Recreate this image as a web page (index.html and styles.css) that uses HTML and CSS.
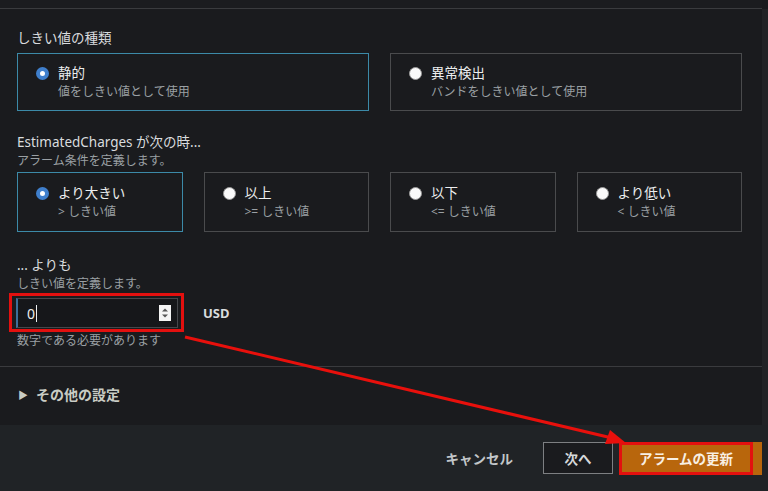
FILE: index.html
```html
<!DOCTYPE html>
<html lang="ja">
<head>
  <meta charset="UTF-8">
  <title>アラームの更新</title>
  <link rel="stylesheet" href="styles.css">
</head>
<body>
  <div class="page">
    <div class="top-strip"></div>

    <div class="panel">
      <div class="field">
        <div class="field-label">しきい値の種類</div>
        <div class="tiles tiles-2">
          <div class="tile selected">
            <span class="radio checked"></span>
            <div>
              <div class="tile-title">静的</div>
              <div class="tile-desc">値をしきい値として使用</div>
            </div>
          </div>
          <div class="tile">
            <span class="radio"></span>
            <div>
              <div class="tile-title">異常検出</div>
              <div class="tile-desc">バンドをしきい値として使用</div>
            </div>
          </div>
        </div>
      </div>

      <div class="field field-condition">
        <div class="field-label">EstimatedCharges が次の時...</div>
        <div class="field-desc">アラーム条件を定義します。</div>
        <div class="tiles tiles-4">
          <div class="tile selected">
            <span class="radio checked"></span>
            <div>
              <div class="tile-title">より大きい</div>
              <div class="tile-desc">&gt; しきい値</div>
            </div>
          </div>
          <div class="tile">
            <span class="radio"></span>
            <div>
              <div class="tile-title">以上</div>
              <div class="tile-desc">&gt;= しきい値</div>
            </div>
          </div>
          <div class="tile">
            <span class="radio"></span>
            <div>
              <div class="tile-title">以下</div>
              <div class="tile-desc">&lt;= しきい値</div>
            </div>
          </div>
          <div class="tile">
            <span class="radio"></span>
            <div>
              <div class="tile-title">より低い</div>
              <div class="tile-desc">&lt; しきい値</div>
            </div>
          </div>
        </div>
      </div>

      <div class="field field-amount">
        <div class="field-label">... よりも</div>
        <div class="field-desc">しきい値を定義します。</div>
        <div class="amount-row">
          <div class="highlight">
            <div class="number-input">
              <span class="value">0</span><span class="caret"></span>
              <span class="spinner">
                <svg width="12" height="16" viewBox="0 0 12 16">
                  <rect width="12" height="16" fill="#f4f4f4"/>
                  <path d="M3 6.5 L6 3.5 L9 6.5 Z" fill="#555"/>
                  <path d="M3 9.5 L6 12.5 L9 9.5 Z" fill="#555"/>
                </svg>
              </span>
            </div>
          </div>
          <span class="unit">USD</span>
        </div>
        <div class="field-hint">数字である必要があります</div>
      </div>

      <div class="expander">
        <span class="caret-right">&#9654;</span>
        <span>その他の設定</span>
      </div>
    </div>

    <div class="footer">
      <button class="btn-link">キャンセル</button>
      <button class="btn-normal">次へ</button>
      <div class="btn-wrap">
        <button class="btn-primary">アラームの更新</button>
      </div>
    </div>

    <svg class="annotation" width="768" height="491" viewBox="0 0 768 491">
      <line x1="185" y1="337" x2="612" y2="438" stroke="#e8100c" stroke-width="3"/>
      <polygon points="626,443 605,444 610,430" fill="#e8100c"/>
    </svg>
  </div>
</body>
</html>
```

FILE: styles.css
```css
body {
  margin: 0;
  background-color: #1a1b1e;
  font-family: "Noto Sans", "Noto Sans CJK JP", sans-serif;
  color: #d5dbdb;
}

.page {
  position: relative;
  width: 768px;
  height: 491px;
  overflow: hidden;
  display: flex;
  flex-direction: column;
}

.top-strip {
  height: 8px;
  border-bottom: 1px solid #3a3b3e;
  margin-right: 6px;
  background-color: #1b1c1f;
}

.panel {
  flex: 1;
  padding: 19px 20px 0 17px;
  border-right: 6px solid #222326;
}

.field {
  margin-bottom: 21px;
}

.field-label {
  font-size: 13.5px;
  line-height: 20px;
  color: #d9dcde;
}

.field-desc,
.field-hint {
  font-size: 12px;
  line-height: 18px;
  color: #9aa0a4;
}

.tiles {
  display: grid;
  gap: 21px;
  margin-top: 5px;
}

.tiles-2 {
  grid-template-columns: 1fr 1fr;
}

.tiles-4 {
  grid-template-columns: repeat(4, 1fr);
  margin-top: 2px;
}

.tile {
  display: flex;
  gap: 9px;
  align-items: flex-start;
  height: 58px;
  box-sizing: border-box;
  padding: 10px 18px;
  border: 1px solid #4a4b4d;
  background-color: #1a1b1e;
}

.tiles-4 .tile {
  height: 60px;
  padding-top: 11px;
}

.tile.selected {
  border-color: #3c8aa8;
}

.radio {
  flex: none;
  width: 13px;
  height: 13px;
  margin-top: 3px;
  border-radius: 50%;
  box-sizing: border-box;
  background-color: #fafafa;
  border: 1px solid #9a9a9a;
}

.radio.checked {
  background-color: #fff;
  border: 4px solid #3f7fcc;
}

.tile-title {
  font-size: 13.5px;
  line-height: 19px;
  color: #eceeef;
}

.tile-desc {
  font-size: 12px;
  line-height: 18px;
  color: #9aa0a4;
}

.field-condition {
  margin-bottom: 23px;
}

.amount-row {
  display: flex;
  align-items: center;
  gap: 19px;
  margin-left: -8px;
}

.highlight {
  border: 3px solid #e3100f;
  padding: 2px 3px 1px 4px;
}

.number-input {
  display: flex;
  align-items: center;
  width: 162px;
  height: 30px;
  box-sizing: border-box;
  padding: 0 6px 0 9px;
  background-color: #16171a;
  border: 1px solid #45474b;
  border-left: 2px solid #3c6f9a;
}

.value {
  font-size: 14px;
  color: #eceeef;
}

.caret {
  width: 1px;
  height: 17px;
  background-color: #eceeef;
  margin-left: 1px;
}

.spinner {
  margin-left: auto;
  display: flex;
}

.unit {
  font-size: 13px;
  font-weight: bold;
  color: #d9dcde;
}

.field-hint {
  margin-top: 0;
}

.field-amount {
  margin-bottom: 16px;
}

.expander {
  margin: 0 -20px 0 -17px;
  padding: 17px 18px;
  border-top: 1px solid #3a3b3e;
  display: flex;
  align-items: center;
  gap: 8px;
  font-size: 14px;
  font-weight: bold;
  color: #c9ccc4;
}

.caret-right {
  font-size: 10px;
  color: #c9ccc4;
}

.footer {
  height: 66px;
  flex: none;
  background-color: #202326;
  display: flex;
  align-items: center;
  justify-content: flex-end;
  padding-right: 6px;
}

button {
  font-family: "Noto Sans", "Noto Sans CJK JP", sans-serif;
  font-size: 13.5px;
  font-weight: bold;
  cursor: pointer;
}

.btn-link {
  background: none;
  border: none;
  color: #c2c6c9;
  margin-right: 24px;
  padding: 0 6px;
}

.btn-normal {
  width: 70px;
  height: 32px;
  background-color: #1a1b1e;
  border: 1px solid #7d7f82;
  color: #d5d8da;
  margin-right: 6px;
}

.btn-wrap {
  background-color: #b8660c;
  padding-right: 9px;
  height: 33px;
  display: flex;
}

.btn-primary {
  width: 134px;
  height: 33px;
  background-color: #b8660c;
  border: 3px solid #e3100f;
  color: #f8efe3;
}

.annotation {
  position: absolute;
  left: 0;
  top: 0;
  pointer-events: none;
}
```
